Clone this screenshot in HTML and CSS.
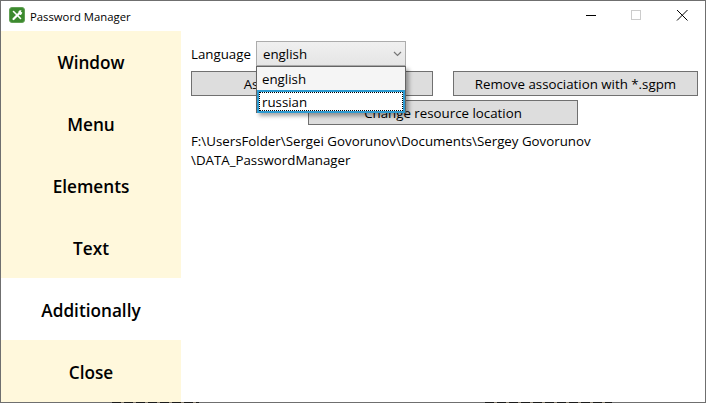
FILE: index.html
```html
<!DOCTYPE html>
<html>
<head>
    <title>Password Manager</title>
    <meta name="viewport" content="width=device-width, initial-scale=1">
    <link rel="stylesheet" href="styles.css">
</head>
<body>
    <div class="appWindow">
        <div class="titleBar">
            <svg class="appIcon" width="16" height="16" viewBox="0 0 16 16">
                <rect x="0.5" y="0.5" width="15" height="15" rx="2.5" fill="#3c8a2e" stroke="#62a055"/>
                <path d="M4.5 12L9.5 7" stroke="#fff" stroke-width="2.2" stroke-linecap="round"/>
                <path d="M4.5 4.5L11.5 11.5" stroke="#fff" stroke-width="1.6" stroke-linecap="round"/>
                <path d="M9.5 4.5A2.5 2.5 0 0 0 12 8L13.4 5.8L11.8 4.6L12.6 3.4A2.5 2.5 0 0 0 9.5 4.5Z" fill="#fff"/>
            </svg>
            <span class="titleText">Password Manager</span>
            <div class="windowButtons">
                <svg class="windowButton" width="46" height="30" viewBox="0 0 46 30"><path d="M19 14.5H29" stroke="#000"/></svg>
                <svg class="windowButton" width="46" height="30" viewBox="0 0 46 30"><rect x="18.5" y="9.5" width="9" height="9" fill="none" stroke="#ccc"/></svg>
                <svg class="windowButton" width="46" height="30" viewBox="0 0 46 30"><path d="M18 9L28.5 19.5M28.5 9L18 19.5" stroke="#000"/></svg>
            </div>
        </div>
        <div class="windowBody">
            <nav class="sideMenu">
                <div class="menuItem">Window</div>
                <div class="menuItem">Menu</div>
                <div class="menuItem">Elements</div>
                <div class="menuItem">Text</div>
                <div class="menuItem active">Additionally</div>
                <div class="menuItem">Close</div>
            </nav>
            <main class="content">
                <div class="languageRow">
                    <span class="languageLabel">Language</span>
                    <div class="comboWrap">
                        <div class="combo">
                            <span>english</span>
                            <svg width="9" height="6" viewBox="0 0 9 6"><path d="M1 1L4.5 4.5L8 1" fill="none" stroke="#777" stroke-width="1.2"/></svg>
                        </div>
                        <div class="comboList">
                            <div class="comboOption">english</div>
                            <div class="comboOption selected"><span class="focusRing">russian</span></div>
                        </div>
                    </div>
                </div>
                <div class="buttonRow">
                    <button class="flatButton wideLeft">Associate with *.sgpm</button>
                    <button class="flatButton wideRight">Remove association with *.sgpm</button>
                </div>
                <div class="centerRow">
                    <button class="flatButton locationButton">Change resource location</button>
                </div>
                <p class="pathText">F:\UsersFolder\Sergei Govorunov\Documents\Sergey Govorunov<br>\DATA_PasswordManager</p>
            </main>
        </div>
        <div class="edgeMark edgeLeft"></div>
        <div class="edgeMark edgeRight"></div>
    </div>
</body>
</html>
```

FILE: styles.css
```css
* {
    box-sizing: border-box;
}
html, body {
    margin: 0;
    height: 100%;
}
body {
    font-family: "Open Sans", "Noto Sans", sans-serif;
    background: #fff;
    color: #000;
    overflow: hidden;
}
.appWindow {
    position: relative;
    width: 706px;
    height: 403px;
    border: 1px solid #6f6f6f;
    display: flex;
    flex-direction: column;
}
.titleBar {
    height: 30px;
    display: flex;
    align-items: center;
    padding-left: 8px;
    flex: none;
}
.appIcon {
    flex: none;
    margin-bottom: 2px;
}
.titleText {
    font-size: 11.3px;
    margin-left: 5px;
}
.windowButtons {
    margin-left: auto;
    display: flex;
}
.windowButton {
    display: block;
}
.windowBody {
    flex: 1;
    display: flex;
    min-height: 0;
}
.sideMenu {
    width: 180px;
    flex: none;
    display: flex;
    flex-direction: column;
}
.menuItem {
    height: 62px;
    padding-top: 2px;
    background: #fff8dc;
    display: flex;
    align-items: center;
    justify-content: center;
    font-size: 17.2px;
    font-weight: 600;
}
.menuItem.active {
    background: #fff;
}
.content {
    flex: 1;
    padding: 10px 7px 0 10px;
    font-size: 13.3px;
}
.languageRow {
    display: flex;
    align-items: center;
    gap: 4px;
    height: 25px;
}
.languageLabel {
    width: 61px;
    flex: none;
}
.comboWrap {
    position: relative;
}
.combo {
    width: 150px;
    height: 25px;
    background: linear-gradient(#f0f0f0, #e5e5e5);
    border: 1px solid #acacac;
    display: flex;
    align-items: center;
    justify-content: space-between;
    padding: 0 3px 0 6px;
}
.comboList {
    position: absolute;
    left: 0;
    top: 25px;
    width: 150px;
    height: 47px;
    background: #fff;
    border: 1px solid #646464;
    box-shadow: 3px 3px 4px rgba(0, 0, 0, 0.35);
    z-index: 2;
}
.comboOption {
    height: 23px;
    padding: 0 5px;
    background: #f5f5f5;
    display: flex;
    align-items: center;
}
.comboOption.selected {
    height: 23px;
    background: #fff;
    border: 2px solid #2d9bd2;
    padding: 0;
    margin: 0 0 -1px;
}
.focusRing {
    display: block;
    width: 100%;
    height: 100%;
    border: 1px dotted #000;
    padding-left: 2px;
    line-height: 18px;
}
.buttonRow {
    display: flex;
    justify-content: space-between;
    margin-top: 5px;
}
.flatButton {
    height: 25px;
    background: #ddd;
    border: 1px solid #707070;
    font: inherit;
    color: inherit;
    padding: 0;
}
.wideLeft {
    width: 242px;
}
.wideRight {
    width: 245px;
}
.centerRow {
    display: flex;
    padding-left: 117px;
    margin-top: 4px;
}
.locationButton {
    width: 270px;
}
.pathText {
    margin: 7px 0 0;
    line-height: 19px;
}
.edgeMark {
    position: absolute;
    bottom: -1px;
    height: 1px;
    background: repeating-linear-gradient(90deg, #1a1a1a 0 9px, #8a8070 9px 12px);
}
.edgeLeft {
    left: 111px;
    width: 87px;
}
.edgeRight {
    left: 484px;
    width: 127px;
}
```
